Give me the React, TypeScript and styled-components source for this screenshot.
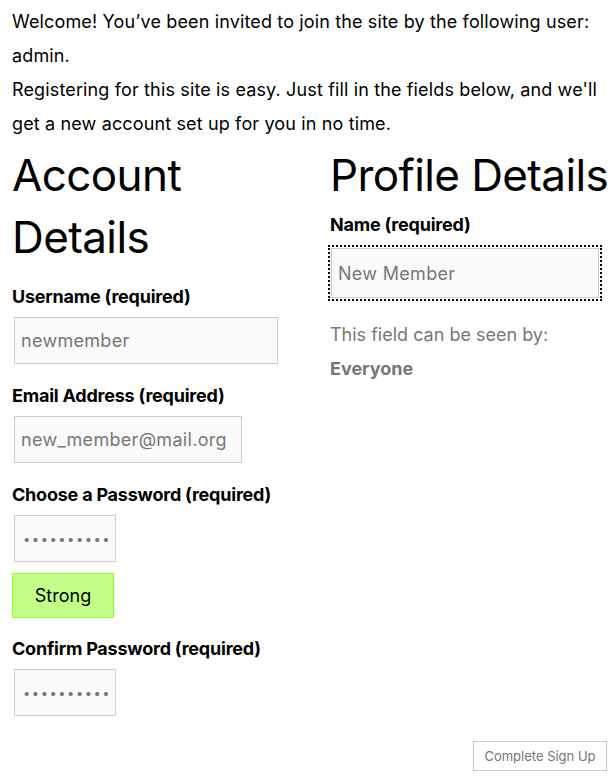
import React from "react";
import styled, { createGlobalStyle } from "styled-components";

const Global = createGlobalStyle`
  html, body { margin: 0; padding: 0; background: #fff; }
  body { font-family: Inter, "Noto Sans", "Liberation Sans", sans-serif; color: #000; }
  * { box-sizing: border-box; }
`;

const Page = styled.div`
  padding: 5px 12px 10px 12px;
  width: 615px;
`;

const Intro = styled.p`
  margin: 0;
  font-size: 18px;
  line-height: 34px;
  letter-spacing: 0.14px;
`;

const Columns = styled.div`
  display: grid;
  grid-template-columns: 1fr 273px;
  column-gap: 28px;
  margin-top: 3px;
`;

const Column = styled.section`
  display: flex;
  flex-direction: column;
  align-items: flex-start;
`;

const Heading = styled.h2<{ $nowrap?: boolean; $gap: number }>`
  margin: 0 0 ${(p) => p.$gap}px 0;
  font-size: 44px;
  font-weight: 400;
  line-height: 62px;
  letter-spacing: -0.6px;
  white-space: ${(p) => (p.$nowrap ? "nowrap" : "normal")};
`;

const Label = styled.label<{ $gap?: number }>`
  display: block;
  font-size: 18px;
  font-weight: 700;
  line-height: 27px;
  letter-spacing: -0.22px;
  margin: 0 0 ${(p) => p.$gap ?? 7}px 0;
`;

const Field = styled.input<{ $w: number; $focus?: boolean }>`
  display: block;
  width: ${(p) => p.$w}px;
  height: ${(p) => (p.$focus ? 50 : 47)}px;
  margin: 0 0 ${(p) => (p.$focus ? 0 : 18)}px ${(p) => (p.$focus ? 1 : 2)}px;
  padding: 0 6px;
  border: 1px solid #ccc;
  background: #fafafa;
  color: #777;
  font-family: Inter, "Noto Sans", "Liberation Sans", sans-serif;
  font-size: 18px;
  letter-spacing: 0.3px;
  outline: ${(p) => (p.$focus ? "2px dotted #000" : "none")};
  outline-offset: 1px;
  &[type="password"] {
    letter-spacing: 1.5px;
    font-size: 13px;
    padding-left: 8px;
  }
`;

const Strength = styled.div`
  width: 102px;
  height: 45px;
  margin: -7px 0 17px 0;
  display: flex;
  align-items: center;
  justify-content: center;
  background: #c3ff88;
  border: 1px solid #8dff1c;
  font-size: 18px;
`;

const Visibility = styled.p`
  margin: 20px 0 0 0;
  color: #777;
  font-size: 18px;
  line-height: 34px;
`;

const Strong = styled.strong`
  display: block;
  font-weight: 700;
`;

const Footer = styled.div`
  display: flex;
  justify-content: flex-end;
  margin-top: 7px;
`;

const Submit = styled.button`
  width: 134px;
  height: 30px;
  background: #fff;
  border: 1px solid #ccc;
  color: #777;
  font-family: Inter, "Noto Sans", "Liberation Sans", sans-serif;
  font-size: 13px;
  padding: 0;
  margin-right: -4px;
`;

export default function App() {
  return (
    <>
      <Global />
      <Page>
        <Intro>Welcome! You’ve been invited to join the site by the following user: admin.</Intro>
        <Intro>
          Registering for this site is easy. Just fill in the fields below, and we'll get a new
          account set up for you in no time.
        </Intro>
        <Columns>
          <Column>
            <Heading $gap={15}>Account Details</Heading>
            <Label>Username (required)</Label>
            <Field $w={264} readOnly defaultValue="newmember" />
            <Label>Email Address (required)</Label>
            <Field $w={228} readOnly defaultValue="new_member@mail.org" />
            <Label>Choose a Password (required)</Label>
            <Field $w={102} type="password" readOnly defaultValue="••••••••••" />
            <Strength>Strong</Strength>
            <Label>Confirm Password (required)</Label>
            <Field $w={102} type="password" readOnly defaultValue="••••••••••" />
          </Column>
          <Column>
            <Heading $gap={5} $nowrap>Profile Details</Heading>
            <Label $gap={10}>Name (required)</Label>
            <Field $w={268} $focus readOnly defaultValue="New Member" />
            <Visibility>
              This field can be seen by:
              <Strong>Everyone</Strong>
            </Visibility>
          </Column>
        </Columns>
        <Footer>
          <Submit type="button">Complete Sign Up</Submit>
        </Footer>
      </Page>
    </>
  );
}
